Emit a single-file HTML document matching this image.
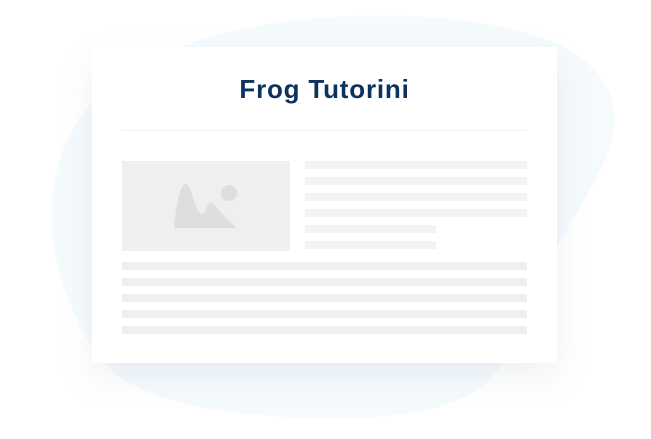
<!DOCTYPE html>
<html><head><style>
html,body{margin:0;padding:0;width:651px;height:439px;background:#fff;overflow:hidden;position:relative;font-family:"Liberation Sans",sans-serif}
.card{position:absolute;left:92px;top:47px;width:465px;height:316px;background:#fff;box-shadow:0 14px 30px rgba(150,170,190,0.15)}
.t{position:absolute;left:0;width:465px;top:27px;text-align:center;font-size:26px;font-weight:bold;color:#0d3260;letter-spacing:0.8px}
.hr{position:absolute;left:30px;width:405px;top:83px;height:1px;background:#eef1fb}
.b{position:absolute;height:8px;background:#f3f3f3}
.f{position:absolute;height:8px;background:#efefef}
</style></head><body>
<svg width="651" height="439" style="position:absolute;left:0;top:0">
<path d="M200 40 C300 8 470 5 560 45 C620 75 625 120 600 170 C570 230 520 300 505 355 C485 415 380 425 260 415 C140 405 100 375 78 320 C40 250 42 160 90 105 C120 72 160 55 200 40 Z" fill="#f5fafd"/>
</svg>
<div class="card">
<div class="t">Frog Tutorini</div>
<div class="hr"></div>
<div style="position:absolute;left:30px;top:114px;width:168px;height:90px;background:#efefef">
<svg width="168" height="90"><circle cx="107" cy="32" r="8" fill="#dedede"/><path d="M52 67 C54 45 58 25 63 23 C68 22 71 38 74 45 C77 53 81 56 84 48 C86 43 88 40 90 42 C94 45 100 54 115 67 Z" fill="#dedede"/></svg>
</div>
<div class="b" style="left:213px;top:114px;width:222px"></div>
<div class="b" style="left:213px;top:130px;width:222px"></div>
<div class="b" style="left:213px;top:146px;width:222px"></div>
<div class="b" style="left:213px;top:162px;width:222px"></div>
<div class="b" style="left:213px;top:178px;width:131px"></div>
<div class="b" style="left:213px;top:194px;width:131px"></div>
<div class="f" style="left:30px;top:215px;width:405px"></div>
<div class="f" style="left:30px;top:231px;width:405px"></div>
<div class="f" style="left:30px;top:247px;width:405px"></div>
<div class="f" style="left:30px;top:263px;width:405px"></div>
<div class="f" style="left:30px;top:279px;width:405px"></div>
</div>
</body></html>
